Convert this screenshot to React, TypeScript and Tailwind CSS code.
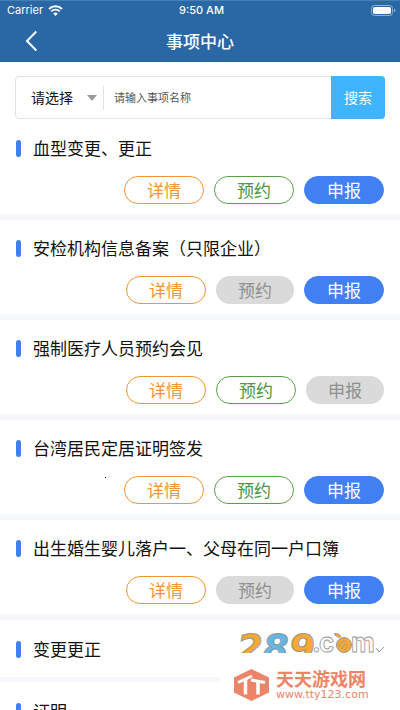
import React, { useState } from 'react';

type ActionState = 'active' | 'disabled';

interface Matter {
  id: number;
  title: string;
  reserve?: ActionState;
  apply?: ActionState;
}

const matters: Matter[] = [
  { id: 1, title: '血型变更、更正', reserve: 'active', apply: 'active' },
  {
    id: 2,
    title: '安检机构信息备案（只限企业）',
    reserve: 'disabled',
    apply: 'active',
  },
  { id: 3, title: '强制医疗人员预约会见', reserve: 'active', apply: 'disabled' },
  { id: 4, title: '台湾居民定居证明签发', reserve: 'active', apply: 'active' },
  {
    id: 5,
    title: '出生婚生婴儿落户一、父母在同一户口簿',
    reserve: 'disabled',
    apply: 'active',
  },
  { id: 6, title: '变更更正' },
  { id: 7, title: '证明' },
];

const pill = 'h-7 rounded-full px-[22px] text-[17px] leading-6';
const disabledPill = `${pill} bg-[#dadada] text-[#8f8f8f]`;

function StatusBar() {
  return (
    <div className="grid h-5 grid-cols-3 items-center border-t border-[#4580b6] pr-1 pl-[7px] font-['Inter',sans-serif] text-[11px]">
      <div className="flex items-center gap-[5px]">
        <span>Carrier</span>
        <svg width="15" height="11" viewBox="0 0 15 11" fill="none">
          <path d="M1 4a9.2 9.2 0 0 1 13 0" stroke="#fff" strokeWidth="2" />
          <path d="M3.3 6.4a6 6 0 0 1 8.4 0" stroke="#fff" strokeWidth="1.8" />
          <path d="M7.5 11 5.2 8.6a3.3 3.3 0 0 1 4.6 0z" fill="#fff" />
        </svg>
      </div>
      <span className="text-center font-medium">9:50 AM</span>
      <svg
        className="justify-self-end"
        width="25"
        height="11"
        viewBox="0 0 25 11"
        fill="none"
      >
        <rect x="0.5" y="0.5" width="21" height="10" rx="3" stroke="#8fb1d3" />
        <rect x="2" y="2" width="18" height="7" rx="1.8" fill="#fff" />
        <path d="M23 3.8v3.4c.9-.3 1.4-1 1.4-1.7S23.9 4.1 23 3.8z" fill="#8fb1d3" />
      </svg>
    </div>
  );
}

function Header() {
  return (
    <header className="bg-[#2a67a5] text-white">
      <StatusBar />
      <div className="grid h-[42px] grid-cols-3 items-center px-6">
        <button type="button" aria-label="返回" className="justify-self-start">
          <svg width="14" height="22" viewBox="0 0 14 22" fill="none">
            <path d="M12.3 1.5 3 11l9.3 9.5" stroke="#fff" strokeWidth="2" />
          </svg>
        </button>
        <h1 className="text-center text-[17px] font-medium">事项中心</h1>
      </div>
    </header>
  );
}

function SearchBar() {
  const [category, setCategory] = useState('');
  const [keyword, setKeyword] = useState('');

  return (
    <form
      className="mx-[15px] mt-[14px] flex h-[43px] items-center rounded-[4px] border border-[#e2e2e2]"
      onSubmit={(e) => e.preventDefault()}
    >
      <div className="relative flex h-6 w-[88px] items-center border-r border-[#e2e2e2]">
        <select
          aria-label="事项类型"
          value={category}
          onChange={(e) => setCategory(e.target.value)}
          className="w-full appearance-none bg-transparent pl-[15px] text-[14px] text-[#111] outline-none"
        >
          <option value="">请选择</option>
        </select>
        <svg
          className="pointer-events-none absolute right-[6px]"
          width="10"
          height="6"
          viewBox="0 0 10 6"
        >
          <path d="M0 0h10L5 6z" fill="#999" />
        </svg>
      </div>
      <input
        type="text"
        aria-label="事项名称"
        placeholder="请输入事项名称"
        value={keyword}
        onChange={(e) => setKeyword(e.target.value)}
        className="min-w-0 flex-1 px-[10px] text-[11px] outline-none placeholder:text-[#555]"
      />
      <button
        type="submit"
        className="-my-px -mr-px w-[54px] self-stretch rounded-r-[4px] bg-[#41b4ff] text-[14px] text-white"
      >
        搜索
      </button>
    </form>
  );
}

function MatterItem({ matter }: { matter: Matter }) {
  const hasActions = matter.reserve && matter.apply;

  return (
    <li
      className={
        hasActions
          ? 'border-b-[6px] border-[#f6f7fa] px-4 pt-4 pb-[10px]'
          : 'border-b-[5px] border-[#f6f7fa] px-4 pt-[17px] pb-4'
      }
    >
      <div className="flex items-center gap-3">
        <span className="h-[17px] w-[5px] rounded-full bg-[#4080f0]" />
        <h2 className="text-[17px] leading-6 whitespace-nowrap text-[#111]">
          {matter.title}
        </h2>
      </div>
      {hasActions && (
        <div className="mt-4 flex justify-end gap-[10px]">
          <button
            type="button"
            className={`${pill} border border-[#ef9632] text-[#ef9632]`}
          >
            详情
          </button>
          {matter.reserve === 'active' ? (
            <button
              type="button"
              className={`${pill} border border-[#58a14b] text-[#4b963e]`}
            >
              预约
            </button>
          ) : (
            <button type="button" disabled className={disabledPill}>
              预约
            </button>
          )}
          {matter.apply === 'active' ? (
            <button
              type="button"
              className={`${pill} border border-[#4080f2] bg-[#4080f2] text-white`}
            >
              申报
            </button>
          ) : (
            <button type="button" disabled className={disabledPill}>
              申报
            </button>
          )}
        </div>
      )}
    </li>
  );
}

function Watermark() {
  return (
    <div className="pointer-events-none absolute right-0 bottom-0 w-[180px]">
      <svg
        className="block"
        width="180"
        height="22"
        viewBox="0 0 180 22"
        stroke="#969696"
      >
        <g
          fontFamily="DejaVu Sans, sans-serif"
          fontSize="37"
          fontWeight="700"
          fontStyle="italic"
        >
          <text x="17" y="30" fill="#f9a931">2</text>
          <text x="43" y="30" fill="#62b7e6">8</text>
          <text x="69" y="30" fill="#f9a931">9</text>
        </g>
        <g
          fontFamily="Inter, sans-serif"
          fontSize="26"
          fontWeight="700"
          fill="#fff"
          strokeWidth="0.8"
        >
          <text x="92" y="21">.</text>
          <text x="99" y="21">c</text>
          <text x="131" y="21">m</text>
        </g>
        {/* fruit-shaped "o" with its leaf */}
        <circle cx="124" cy="14" r="7.500" fill="#f9a931" />
        <path d="M119 7c-1-2-4-2-5-4 3-1 6 0 7 3" fill="#f9a931" />
        <path
          d="M119 16c0-4 3-6 7-6M122 18c0-3 2-5 5-5M125 19c0-1 1-3 3-3"
          fill="none"
          strokeWidth="0.9"
        />
        <path d="m156 17 3 4 5-5" fill="none" />
      </svg>
      <div className="flex h-[57px] items-center gap-[7px] bg-white pt-[6px] pl-[14px] text-[#ed8367]">
        <svg width="35" height="32" viewBox="0 0 35 32">
          <path d="M17.5 0 35 8.5v15L17.5 32 0 23.500v-15z" fill="currentColor" />
          <path
            d="m4 13.500 14-6.500M17 11l14 2.500"
            fill="none"
            stroke="#fff"
            strokeWidth="3"
          />
          <path
            d="M11.500 10v15.500M24 12v13.500"
            fill="none"
            stroke="#fff"
            strokeWidth="3.500"
          />
        </svg>
        <div>
          <p className="text-[18px] leading-5 font-bold">天天游戏网</p>
          <p className="font-['DejaVu_Sans',sans-serif] text-[11px] leading-[14px]">
            www.tty123.com
          </p>
        </div>
      </div>
    </div>
  );
}

export default function App() {
  return (
    <div className="relative h-screen overflow-hidden bg-white font-['Noto_Sans_CJK_SC',sans-serif]">
      <Header />
      <SearchBar />
      <ul className="mt-px">
        {matters.map((matter) => (
          <MatterItem key={matter.id} matter={matter} />
        ))}
      </ul>
      <span className="absolute top-[477px] left-[105px] size-px bg-black" />
      <Watermark />
    </div>
  );
}
